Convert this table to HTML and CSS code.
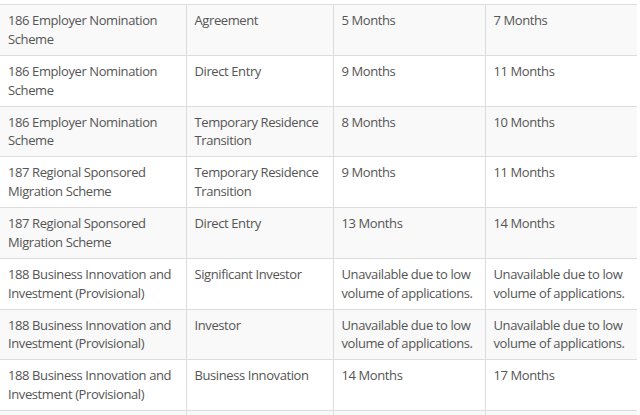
FILE: index.html
```html
<!DOCTYPE html>
<html>
<head>
<meta charset="utf-8">
<link rel="stylesheet" href="styles.css">
</head>
<body>
<table class="times">
<colgroup><col class="c1"><col class="c2"><col class="c3"><col class="c4"></colgroup>
<tbody>
<tr><td>186 Employer Nomination Scheme</td><td>Agreement</td><td>5 Months</td><td>7 Months</td></tr>
<tr><td>186 Employer Nomination Scheme</td><td>Direct Entry</td><td>9 Months</td><td>11 Months</td></tr>
<tr><td>186 Employer Nomination Scheme</td><td>Temporary Residence Transition</td><td>8 Months</td><td>10 Months</td></tr>
<tr><td>187 Regional Sponsored Migration Scheme</td><td>Temporary Residence Transition</td><td>9 Months</td><td>11 Months</td></tr>
<tr><td>187 Regional Sponsored Migration Scheme</td><td>Direct Entry</td><td>13 Months</td><td>14 Months</td></tr>
<tr><td>188 Business Innovation and Investment (Provisional)</td><td>Significant Investor</td><td>Unavailable due to low volume of applications.</td><td>Unavailable due to low volume of applications.</td></tr>
<tr><td>188 Business Innovation and Investment (Provisional)</td><td>Investor</td><td>Unavailable due to low volume of applications.</td><td>Unavailable due to low volume of applications.</td></tr>
<tr><td>188 Business Innovation and Investment (Provisional)</td><td>Business Innovation</td><td>14 Months</td><td>17 Months</td></tr>
<tr><td>&nbsp;</td><td>&nbsp;</td><td>&nbsp;</td><td>&nbsp;</td></tr>
</tbody>
</table>
</body>
</html>
```
FILE: styles.css
```css
html, body {
  margin: 0;
  padding: 0;
  background: #fff;
}
body {
  padding-top: 4px;
  font-family: "Open Sans", "Liberation Sans", sans-serif;
  font-size: 13px;
  letter-spacing: -0.4px;
  color: #555;
}
.times {
  width: 637px;
  table-layout: fixed;
  border-collapse: collapse;
}
.c1 { width: 186px; }
.c2 { width: 147px; }
.c3 { width: 152px; }
.c4 { width: 152px; }
.times td {
  border-top: 1px solid #ddd;
  border-left: 1px solid #ddd;
  padding: 6px 4px 6px 8px;
  line-height: 18.875px;
  height: 37.75px;
  vertical-align: top;
}
.times td:first-child {
  border-left: none;
}
.times tr:nth-child(odd) td {
  background: #f9f9f9;
}
```
